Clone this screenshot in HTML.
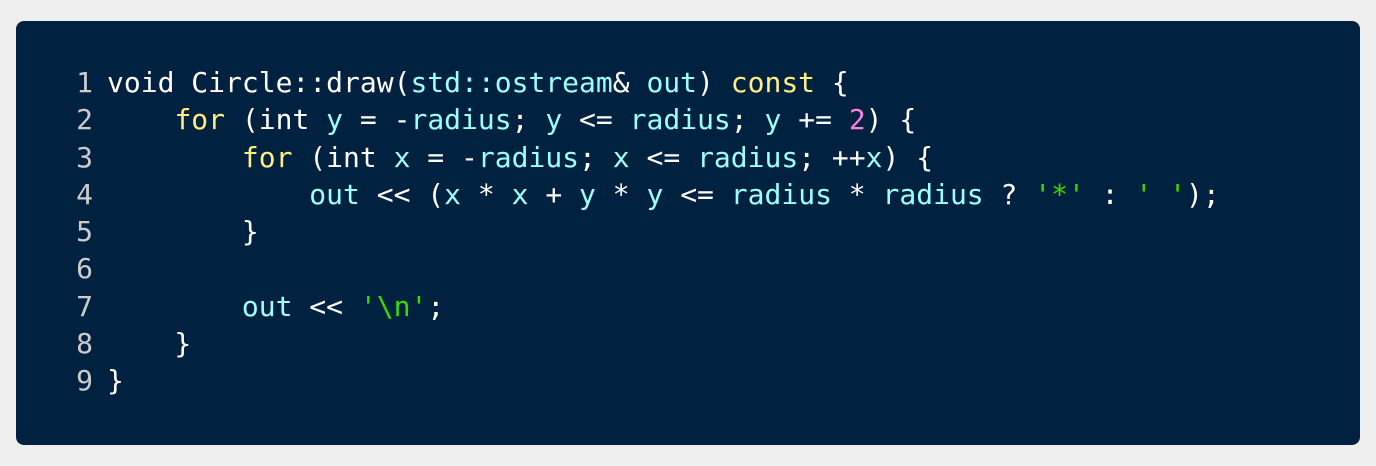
<!DOCTYPE html>
<html><head><style>
body{margin:0;background:#efefef;width:1376px;height:466px;overflow:hidden}
.p{position:absolute;left:16px;top:21px;width:1344px;height:424px;background:#002240;border-radius:8px}
pre{position:absolute;margin:0;font-family:"DejaVu Sans Mono","Liberation Mono",monospace;font-size:28px;line-height:37.25px;color:#fff}
.n{left:43px;top:43px;color:#ccc;text-align:right;width:34px}
.c{left:91px;top:43px}
.k{color:#ffee80}.v{color:#9effff}.m{color:#ff80e1}.s{color:#3ad900}
</style></head><body><div class="p">
<pre class="n">1
2
3
4
5
6
7
8
9</pre>
<pre class="c">void Circle::draw(<span class="v">std::ostream</span>&amp; <span class="v">out</span>) <span class="k">const</span> {
    <span class="k">for</span> (int <span class="v">y</span> = -<span class="v">radius</span>; <span class="v">y</span> &lt;= <span class="v">radius</span>; <span class="v">y</span> += <span class="m">2</span>) {
        <span class="k">for</span> (int <span class="v">x</span> = -<span class="v">radius</span>; <span class="v">x</span> &lt;= <span class="v">radius</span>; ++<span class="v">x</span>) {
            <span class="v">out</span> &lt;&lt; (<span class="v">x</span> * <span class="v">x</span> + <span class="v">y</span> * <span class="v">y</span> &lt;= <span class="v">radius</span> * <span class="v">radius</span> ? <span class="s">'*'</span> : <span class="s">' '</span>);
        }

        <span class="v">out</span> &lt;&lt; <span class="s">'\n'</span>;
    }
}</pre>
</div></body></html>
